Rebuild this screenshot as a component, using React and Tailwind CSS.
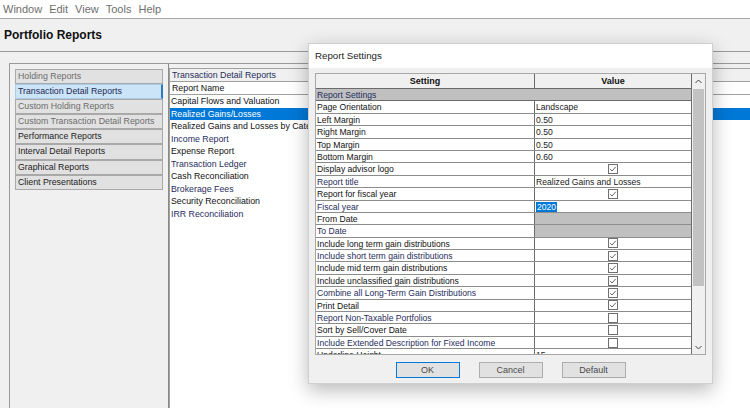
import React from "react";

const font = { fontFamily: '"Liberation Sans", Arial, sans-serif' };

const groups = [
  { name: "Holding Reports", dim: true },
  { name: "Transaction Detail Reports", active: true },
  { name: "Custom Holding Reports", dim: true },
  { name: "Custom Transaction Detail Reports", dim: true },
  { name: "Performance Reports" },
  { name: "Interval Detail Reports" },
  { name: "Graphical Reports" },
  { name: "Client Presentations" },
];

const reports = [
  { name: "Capital Flows and Valuation" },
  { name: "Realized Gains/Losses", selected: true },
  { name: "Realized Gains and Losses by Category" },
  { name: "Income Report", navy: true },
  { name: "Expense Report" },
  { name: "Transaction Ledger", navy: true },
  { name: "Cash Reconciliation" },
  { name: "Brokerage Fees", navy: true },
  { name: "Security Reconciliation" },
  { name: "IRR Reconciliation", navy: true },
];

const settings = [
  { label: "Page Orientation", value: "Landscape" },
  { label: "Left Margin", value: "0.50" },
  { label: "Right Margin", value: "0.50" },
  { label: "Top Margin", value: "0.50" },
  { label: "Bottom Margin", value: "0.60" },
  { label: "Display advisor logo", check: true },
  { label: "Report title", value: "Realized Gains and Losses", navy: true },
  { label: "Report for fiscal year", check: true },
  { label: "Fiscal year", highlight: "2020", navy: true },
  { label: "From Date", disabled: true },
  { label: "To Date", disabled: true, navy: true },
  { label: "Include long term gain distributions", check: true },
  { label: "Include short term gain distributions", check: true, navy: true },
  { label: "Include mid term gain distributions", check: true },
  { label: "Include unclassified gain distributions", check: true },
  { label: "Combine all Long-Term Gain Distributions", check: true, navy: true },
  { label: "Print Detail", check: true },
  { label: "Report Non-Taxable Portfolios", check: false, navy: true },
  { label: "Sort by Sell/Cover Date", check: false },
  { label: "Include Extended Description for Fixed Income", check: false, navy: true },
  { label: "Underline Height", value: "15" },
];

function CheckBox({ checked }) {
  return (
    <svg width="10" height="10" viewBox="0 0 10 10">
      <rect x="0.5" y="0.5" width="9" height="9" fill="#fff" stroke="#6f6f6f" />
      {checked && (
        <path d="M2.2 5.2 L4 7 L7.8 2.8" fill="none" stroke="#555" strokeWidth="0.9" />
      )}
    </svg>
  );
}

function Chevron({ up }) {
  return (
    <svg width="7" height="5" viewBox="0 0 7 5">
      <path
        d={up ? "M0.5 4 L3.5 1 L6.5 4" : "M0.5 1 L3.5 4 L6.5 1"}
        fill="none"
        stroke="#444"
        strokeWidth="1"
      />
    </svg>
  );
}

function SettingRow({ row }) {
  return (
    <div className="flex h-[12.4px] shrink-0 border-b border-[#8c8c8c] bg-white">
      <div
        className={`w-[219px] shrink-0 border-r border-[#6b6b6b] pl-[1px] leading-[12.5px] whitespace-nowrap overflow-hidden ${
          row.navy ? "text-[#1f2d5c]" : "text-[#111]"
        }`}
      >
        {row.label}
      </div>
      <div
        className={`flex-1 leading-[12.5px] whitespace-nowrap overflow-hidden ${
          row.disabled ? "bg-[#c0c0c0]" : ""
        } ${row.check !== undefined ? "flex items-center justify-center" : "pl-[1px]"}`}
      >
        {row.value && <span className="text-[#1a1a1a]">{row.value}</span>}
        {row.highlight && (
          <span className="bg-[#0078d7] text-white px-[1px]">{row.highlight}</span>
        )}
        {row.check !== undefined && <CheckBox checked={row.check} />}
      </div>
    </div>
  );
}

export default function App() {
  return (
    <div
      style={font}
      className="relative w-[750px] h-[408px] overflow-hidden bg-[#f0f0f0] text-[#1a1a1a]"
    >
      {/* menu bar */}
      <div className="h-[19px] bg-white border-b border-[#a8a8a8] flex items-center gap-[7px] pl-[3px] text-[11px] text-[#6e6e6e]">
        <span>Window</span>
        <span>Edit</span>
        <span>View</span>
        <span>Tools</span>
        <span>Help</span>
      </div>

      {/* page title */}
      <div className="h-[33px] border-b border-[#9a9a9a] flex items-center pl-[4px] text-[12px] font-bold text-[#111]">
        Portfolio Reports
      </div>

      {/* content */}
      <div className="pt-[11px] pl-[9px] h-[356px]">
        <div className="flex h-full border-t border-l border-[#9a9a9a]">
          {/* report groups */}
          <div className="w-[159px] shrink-0 border-r border-[#8a8a8a] pt-[5px] pl-[5px] pr-[5px]">
            {groups.map((g) => (
              <div
                key={g.name}
                className={`h-[15.1px] border px-[2px] text-[8.8px] leading-[13px] whitespace-nowrap overflow-hidden ${
                  g.active
                    ? "bg-[#cce4f7] border-[#a9cde9] border-r-[#2f78c0] border-r-2 text-[#1c2a55]"
                    : "bg-[#e1e1e1] border-[#a9a9a9] " + (g.dim ? "text-[#6c6c6c]" : "text-[#222]")
                }`}
              >
                {g.name}
              </div>
            ))}
          </div>

          {/* report list */}
          <div className="flex-1 flex flex-col pt-[4px] text-[8.8px]">
            <div className="h-[14px] border-t border-b border-l border-[#a0a0a0] pl-[2px] leading-[13px] text-[#1f2d5c]">
              Transaction Detail Reports
            </div>
            <div className="h-[13px] border-b border-l border-[#a0a0a0] bg-white pl-[2px] leading-[13px] text-[#111]">
              Report Name
            </div>
            <div className="flex-1 bg-white border-l border-[#a0a0a0]">
              {reports.map((r) => (
                <div
                  key={r.name}
                  className={`h-[12.5px] pl-[1px] leading-[13px] whitespace-nowrap ${
                    r.selected
                      ? "bg-[#0078d7] text-white"
                      : r.navy
                      ? "text-[#1f2d5c]"
                      : "text-[#111]"
                  }`}
                >
                  {r.name}
                </div>
              ))}
            </div>
          </div>
        </div>
      </div>

      {/* dialog */}
      <div className="absolute left-[308px] top-[43px] w-[405px] h-[341px] bg-[#f0f0f0] border border-[#cfcfcf] shadow-[0_6px_18px_rgba(0,0,0,0.28)] flex flex-col">
        <div className="h-[24px] bg-white flex items-center pl-[6px] text-[9.7px] text-[#222]">
          Report Settings
        </div>
        <div className="mt-[5px] mx-[6px] h-[282px] border border-[#a7a7a7] flex text-[8.6px]">
          <div className="flex-1 flex flex-col overflow-hidden border-r border-[#6b6b6b]">
            <div className="flex h-[15px] shrink-0 bg-[#f0f0f0] border-b border-[#6b6b6b] font-bold text-[9px] text-[#111]">
              <div className="w-[219px] shrink-0 border-r border-[#6b6b6b] text-center leading-[14px]">
                Setting
              </div>
              <div className="flex-1 text-center leading-[14px]">Value</div>
            </div>
            <div className="h-[12.4px] shrink-0 bg-[#c0c0c0] border-b border-[#6b6b6b] pl-[1px] leading-[12.5px] text-[#1f2d5c]">
              Report Settings
            </div>
            {settings.map((row) => (
              <SettingRow key={row.label} row={row} />
            ))}
          </div>
          <div className="w-[13px] shrink-0 flex flex-col bg-[#f0f0f0]">
            <div className="h-[15px] flex items-center justify-center">
              <Chevron up />
            </div>
            <div className="h-[197px] mx-[1px] bg-[#c2c2c2]" />
            <div className="flex-1" />
            <div className="h-[14px] flex items-center justify-center">
              <Chevron />
            </div>
          </div>
        </div>
        <div className="flex justify-center gap-[19px] mt-[7px] text-[9px] text-[#4a4a4a]">
          <button className="w-[64px] h-[16px] bg-[#e1e1e1] border border-[#0078d7] leading-[14px]">
            OK
          </button>
          <button className="w-[64px] h-[16px] bg-[#e1e1e1] border border-[#adadad] leading-[14px]">
            Cancel
          </button>
          <button className="w-[64px] h-[16px] bg-[#e1e1e1] border border-[#adadad] leading-[14px]">
            Default
          </button>
        </div>
      </div>
    </div>
  );
}
